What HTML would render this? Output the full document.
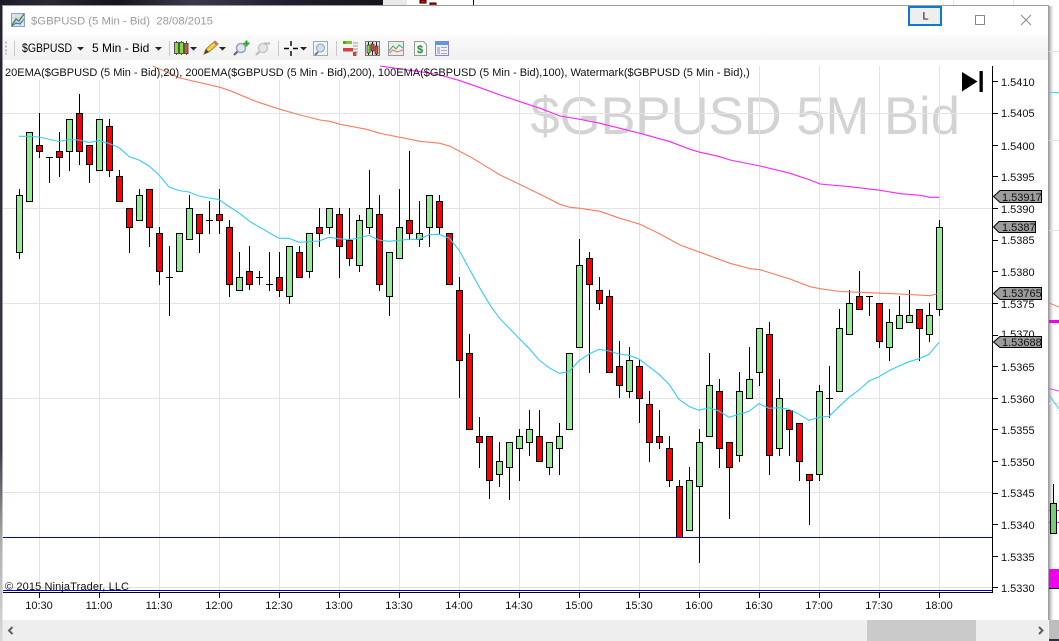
<!DOCTYPE html>
<html><head><meta charset="utf-8"><title>$GBPUSD</title>
<style>
html,body{margin:0;padding:0;background:#fff;width:1059px;height:641px;overflow:hidden}
svg{display:block;position:absolute;left:0;top:0}
text{font-family:"Liberation Sans",sans-serif}
</style></head><body>
<svg width="1059" height="641" viewBox="0 0 1059 641" xmlns="http://www.w3.org/2000/svg">
<defs>
<linearGradient id="top" x1="0" x2="1" y1="0" y2="0"><stop offset="0" stop-color="#1c1c28"/><stop offset=".12" stop-color="#2a2a35"/><stop offset=".3" stop-color="#14141e"/><stop offset=".5" stop-color="#3a3a48"/><stop offset=".75" stop-color="#20202c"/><stop offset="1" stop-color="#15151c"/></linearGradient>
<linearGradient id="left" x1="0" x2="0" y1="0" y2="1"><stop offset="0" stop-color="#20242e"/><stop offset=".7" stop-color="#3a3e48"/><stop offset=".85" stop-color="#b0b0b4"/><stop offset="1" stop-color="#d8d8d8"/></linearGradient>
<linearGradient id="tb" x1="0" x2="0" y1="0" y2="1"><stop offset="0" stop-color="#fbfbfb"/><stop offset="1" stop-color="#f0f0f0"/></linearGradient>
<linearGradient id="sh" x1="0" x2="1" y1="0" y2="0"><stop offset="0" stop-color="#a8a8a8"/><stop offset=".6" stop-color="#e8e8e8"/><stop offset="1" stop-color="#e8e8e8" stop-opacity="0"/></linearGradient>
</defs>

<!-- backdrop -->
<rect width="1059" height="641" fill="#fff"/>
<rect x="0" y="0" width="383" height="5" fill="url(#top)"/>
<rect x="383" y="0" width="24" height="5" fill="#e9e9e9"/>
<rect x="1049" y="6" width="5" height="614" fill="url(#sh)"/>
<g shape-rendering="crispEdges">
<path d="M953.5 0V5M1013.5 0V5" stroke="#e3e3e3"/>
<rect x="420" y="0" width="6" height="3" fill="#f00" stroke="#000"/>
<rect x="430" y="3" width="6" height="3" fill="#f00" stroke="#000"/>
<path d="M473.5 0V5" stroke="#000"/>
<!-- neighbouring chart at the right -->
<path d="M1049 51.5H1059M1049 140.5H1059M1049 230.5H1059M1049 403.5H1059" stroke="#e3e3e3"/>
<path d="M1049 92.5H1059" stroke="#33e0e8"/>
<rect x="1049" y="320" width="10" height="3" fill="#ee00ee"/>
<path d="M1049 510.5H1059M1049 522.5H1059" stroke="#ee00ee"/>
<rect x="1049" y="569" width="10" height="19" fill="#ee00ee"/>
<path d="M1049 588.5H1059" stroke="#000"/>
<path d="M1053.5 484V534" stroke="#000"/>
<rect x="1050.5" y="503.5" width="6" height="30" fill="#77cc77" stroke="#000"/>
<rect x="1049" y="620" width="10" height="21" fill="#bdbdbd"/>
<rect x="1049" y="639" width="10" height="2" fill="#2a3040"/>
</g>
<path d="M1049 303L1059 307" stroke="#ff7f60" fill="none"/>
<path d="M1049 388.5L1059 391" stroke="#ee44ee" fill="none"/>
<path d="M1049 395L1059 409" stroke="#33ccff" fill="none"/>

<!-- window -->
<rect x="0" y="5" width="2.5" height="636" fill="url(#left)"/>
<rect x="2.5" y="5.5" width="1046" height="636" fill="#fff"/>
<path d="M2 5.5H1048.5V620" fill="none" stroke="#9c9c9c"/>
<rect x="3" y="35" width="1045" height="25" fill="url(#tb)"/>

<!-- title bar -->
<rect x="11.5" y="13.5" width="13" height="13" fill="#dfe6f0" stroke="#8ea4c0"/>
<path d="M12 18h12M12 22h12M16 14v12M20 14v12" stroke="#b4c4d8" stroke-width=".7"/>
<path d="M12 25l4-6 3 2 5-7" fill="none" stroke="#3a8a2a" stroke-width="1.3"/>
<path d="M12 26l4-3 4 1 4-5" fill="none" stroke="#3060c0" stroke-width="1"/>
<text x="31" y="24.5" font-size="11.33" fill="#9b9b9b" xml:space="preserve">$GBPUSD (5 Min - Bid)  28/08/2015</text>
<rect x="909" y="7" width="32" height="18" fill="#eeeeee" stroke="#0a7ad6" stroke-width="2"/>
<text x="925.5" y="19.5" font-size="11" fill="#111" text-anchor="middle">L</text>
<rect x="975.5" y="15.5" width="9" height="9" fill="none" stroke="#888"/>
<path d="M1021 15L1031 25M1031 15L1021 25" stroke="#8a8a8a" fill="none"/>

<!-- toolbar -->
<path d="M6 41.5v2M6 45.5v2M6 49.5v2M6 53v1.5" stroke="#bbb" stroke-width="2"/>
<path d="M14.5 41V56M169.5 41V56M278.5 41V56M336.5 41V56" stroke="#c8c8c8"/>
<text x="22" y="52" font-size="11.5" fill="#000" textLength="50" lengthAdjust="spacingAndGlyphs">$GBPUSD</text>
<path d="M77 47h7l-3.5 3.5zM155 47h7l-3.5 3.5zM190 47h7l-3.5 3.5zM219 47h7l-3.5 3.5zM300 47h7l-3.5 3.5z" fill="#222"/>
<text x="92" y="52" font-size="12" fill="#000">5 Min - Bid</text>
<!-- candles icon -->
<g stroke="#555">
<path d="M176.5 41V55M181.5 41V55M186.5 41V55" stroke-width="1"/>
<rect x="174.5" y="42.5" width="4" height="11" fill="#7fe02f"/>
<rect x="179.5" y="42.5" width="4" height="11" fill="#7fe02f"/>
<rect x="184.5" y="43.5" width="3.5" height="10" fill="#e64a2a"/>
</g>
<!-- pencil -->
<path d="M204 54l2-5 9-8 3 3-9 8z" fill="#f7d24a" stroke="#a5841e"/>
<path d="M204 54l2-5 3 3z" fill="#444"/>
<path d="M214 42l3 3" stroke="#e07070" stroke-width="2"/>
<!-- magnifier plus -->
<path d="M234 55l4-4" stroke="#666" stroke-width="2.2"/>
<circle cx="241" cy="48" r="4.5" fill="#dbe8f8" stroke="#98a4b4" stroke-width="1.5"/>
<path d="M243.5 43.5h6M246.5 40.5v6" stroke="#22aa22" stroke-width="2"/>
<!-- magnifier minus -->
<path d="M256 55l4-4" stroke="#bbb" stroke-width="2.2"/>
<circle cx="263" cy="48" r="4.5" fill="#e6e6e6" stroke="#c8c8c8" stroke-width="1.5"/>
<path d="M264 43.5h6" stroke="#bbb" stroke-width="2"/>
<!-- crosshair -->
<path d="M284 48.5h5M293 48.5h5M291 41v5M291 51v5" stroke="#000" stroke-width="1.4"/>
<!-- zoom box -->
<rect x="313.5" y="41.5" width="14" height="14" fill="#f4f4f4" stroke="#aaa"/>
<path d="M315 55l3-3" stroke="#777" stroke-width="2"/>
<circle cx="320.5" cy="48" r="4" fill="#cfe0f6" stroke="#8aa0b8"/>
<!-- indicator icons -->
<rect x="343" y="41" width="9" height="3" fill="#7fc92e"/><rect x="343" y="41" width="3" height="3" fill="#5aa020"/>
<path d="M353 43h5M353 46h5M353 49h5M353 52h5" stroke="#9a9a9a"/>
<rect x="343" y="48" width="10" height="3.5" fill="#d64040"/>
<rect x="353" y="52" width="3.5" height="4" fill="#d64040"/>
<rect x="365.5" y="41.5" width="14" height="14" fill="#e8e8e8" stroke="#777"/>
<path d="M368.5 42v13M372.5 42v13M376.5 42v13" stroke="#222"/>
<rect x="367" y="45" width="3" height="8" fill="#7fe02f" stroke="#222" stroke-width=".6"/>
<rect x="371" y="44" width="3" height="7" fill="#e64a2a" stroke="#222" stroke-width=".6"/>
<rect x="375" y="46" width="3" height="8" fill="#e64a2a" stroke="#222" stroke-width=".6"/>
<rect x="388.5" y="41.5" width="15" height="14" fill="#ececec" stroke="#999"/>
<path d="M389 51l4-5 3 3 3-4 4 3" fill="none" stroke="#3fae5a"/>
<path d="M389 53l4-3 4 2 6-2" fill="none" stroke="#e07070"/>
<path d="M414.5 41.5h9l3 3v11h-12z" fill="#f8f8f8" stroke="#999"/>
<text x="420" y="53" font-size="11" font-weight="bold" fill="#1a8a2a" text-anchor="middle">$</text>
<rect x="435.5" y="41.5" width="13" height="14" fill="#f0f0fa" stroke="#8888c0"/>
<rect x="436" y="42" width="12" height="3" fill="#5a9ae0"/>
<rect x="437" y="47" width="3" height="7" fill="#c8b8e8"/>
<path d="M441 47.5h6M441 50.5h6M441 53.5h6" stroke="#aaa"/>

<!-- chart -->
<text x="960" y="134" font-size="52.6" fill="#d3d3d3" text-anchor="end">$GBPUSD 5M Bid</text>
<g shape-rendering="crispEdges" stroke="#e3e3e3" fill="none">
<path d="M39.5 66V593M99.5 66V593M159.5 66V593M219.5 66V593M279.5 66V593M339.5 66V593M399.5 66V593M459.5 66V593M519.5 66V593M579.5 66V593M639.5 66V593M699.5 66V593M759.5 66V593M819.5 66V593M879.5 66V593M939.5 66V593"/>
<path d="M3 113.5H992M3 208.5H992M3 303.5H992M3 398.5H992M3 492.5H992M3 587.5H992"/>
</g>
<rect x="3" y="62" width="748" height="18" fill="#fff"/>

<!-- wicks -->
<path shape-rendering="crispEdges" stroke="#000" fill="none" d="M19.5 189V259M39.5 113V158M49.5 158V183M59.5 132V177M69.5 119V171M79.5 94V165M89.5 145V183M109.5 119V177M119.5 170V201M129.5 208V253M139.5 189V220M149.5 189V247M159.5 227V285M169.5 246V316M189.5 195V239M199.5 214V253M209.5 201V234M219.5 189V234M229.5 220V297M239.5 252V290M249.5 246V290M259.5 271V285M269.5 252V291M279.5 252V297M289.5 246V304M299.5 246V277M309.5 233V278M319.5 208V247M329.5 208V234M339.5 208V278M349.5 208V266M359.5 215V272M369.5 170V234M379.5 195V291M389.5 252V316M399.5 189V258M409.5 151V240M419.5 201V247M429.5 195V247M439.5 195V234M459.5 277V398M469.5 334V429M479.5 417V468M489.5 436V499M499.5 442V487M509.5 442V500M519.5 429V481M529.5 410V456M539.5 410V461M549.5 442V475M559.5 423V475M579.5 239V347M589.5 252V373M599.5 277V310M609.5 290V372M619.5 341V398M629.5 347V398M639.5 360V423M649.5 391V462M659.5 410V449M669.5 436V487M679.5 480V537M689.5 467V530M699.5 429V563M709.5 353V436M719.5 379V468M729.5 442V519M739.5 372V462M749.5 347V398M759.5 328V386M769.5 322V475M779.5 379V456M789.5 410V456M799.5 423V481M809.5 474V525M819.5 385V481M829.5 366V418M839.5 309V391M849.5 290V334M859.5 271V309M869.5 296V316M879.5 303V348M889.5 309V361M899.5 296V328M909.5 290V322M919.5 309V361M929.5 303V342M939.5 220V316M46 157.5H53M166 277.5H173M206 220.5H213M256 277.5H263M266 284.5H273M826 398.5H833M866 296.5H873"/>
<!-- green bodies -->
<path shape-rendering="crispEdges" stroke="#000" fill="#90ee90" d="M16.5 195.5h6v57h-6zM26.5 132.5h6v69h-6zM66.5 119.5h6v32h-6zM96.5 119.5h6v51h-6zM136.5 195.5h6v25h-6zM176.5 233.5h6v38h-6zM186.5 208.5h6v31h-6zM236.5 277.5h6v13h-6zM286.5 246.5h6v50h-6zM306.5 233.5h6v38h-6zM326.5 208.5h6v19h-6zM356.5 220.5h6v45h-6zM366.5 208.5h6v19h-6zM386.5 252.5h6v44h-6zM396.5 227.5h6v31h-6zM416.5 233.5h6v6h-6zM426.5 195.5h6v32h-6zM496.5 461.5h6v13h-6zM506.5 442.5h6v25h-6zM516.5 436.5h6v12h-6zM526.5 429.5h6v13h-6zM546.5 442.5h6v25h-6zM556.5 436.5h6v12h-6zM566.5 353.5h6v76h-6zM576.5 265.5h6v82h-6zM626.5 360.5h6v31h-6zM686.5 480.5h6v50h-6zM696.5 442.5h6v44h-6zM706.5 385.5h6v51h-6zM736.5 391.5h6v64h-6zM746.5 379.5h6v19h-6zM756.5 328.5h6v44h-6zM776.5 398.5h6v50h-6zM816.5 391.5h6v83h-6zM836.5 328.5h6v63h-6zM846.5 303.5h6v31h-6zM886.5 322.5h6v25h-6zM896.5 315.5h6v13h-6zM906.5 315.5h6v7h-6zM926.5 315.5h6v19h-6zM936.5 227.5h6v82h-6z"/>
<!-- red bodies -->
<path shape-rendering="crispEdges" stroke="#000" fill="#ff0000" d="M36.5 145.5h6v6h-6zM56.5 151.5h6v6h-6zM76.5 113.5h6v38h-6zM86.5 145.5h6v19h-6zM106.5 126.5h6v44h-6zM116.5 176.5h6v25h-6zM126.5 208.5h6v19h-6zM146.5 189.5h6v38h-6zM156.5 233.5h6v38h-6zM196.5 214.5h6v19h-6zM216.5 214.5h6v6h-6zM226.5 227.5h6v57h-6zM246.5 271.5h6v13h-6zM276.5 277.5h6v13h-6zM296.5 252.5h6v25h-6zM316.5 227.5h6v6h-6zM336.5 214.5h6v32h-6zM346.5 240.5h6v18h-6zM376.5 214.5h6v70h-6zM406.5 220.5h6v13h-6zM436.5 201.5h6v26h-6zM446.5 233.5h6v51h-6zM456.5 290.5h6v70h-6zM466.5 353.5h6v76h-6zM476.5 436.5h6v6h-6zM486.5 436.5h6v44h-6zM536.5 436.5h6v25h-6zM586.5 258.5h6v26h-6zM596.5 290.5h6v13h-6zM606.5 296.5h6v76h-6zM616.5 366.5h6v19h-6zM636.5 366.5h6v32h-6zM646.5 404.5h6v38h-6zM656.5 436.5h6v6h-6zM666.5 448.5h6v32h-6zM676.5 486.5h6v51h-6zM716.5 391.5h6v57h-6zM726.5 442.5h6v25h-6zM766.5 334.5h6v121h-6zM786.5 410.5h6v19h-6zM796.5 423.5h6v38h-6zM806.5 474.5h6v6h-6zM856.5 296.5h6v13h-6zM876.5 303.5h6v38h-6zM916.5 309.5h6v19h-6z"/>

<!-- moving averages -->
<polyline fill="none" stroke="#ff7a5c" stroke-width="1.1" points="153,66 180,78 220,87.3 230,90.7 256.7,101.7 280,109.3 300,115 320,120 330,121.3 340,124.3 366.7,129.3 380,133.3 400,137.3 420,141.3 440,143.3 450,146.3 470,156.7 480,162.7 500,175 520,184.5 540,194.3 560,204.3 570,207.3 580,208.3 600,211.3 620,218.3 640,224.3 660,234 680,245 700,252.3 730,263.3 750,268.7 760,269.7 790,279 810,286.7 820,288.7 840,291.5 860,292.3 900,294 930,295.7 936.7,294"/>
<polyline fill="none" stroke="#ff22ff" stroke-width="1.1" points="380,66 420,71.7 440,75 460,80.7 480,87.7 500,95 520,101.7 540,108.3 560,116 580,119.3 600,123.3 620,128.3 640,133.3 670,141.7 690,149.3 700,152.3 720,156.7 730,160 760,166 790,173.3 810,180 820,184 850,186.7 880,190.3 900,193.7 920,195.3 930,197.3 939,197.3"/>
<polyline fill="none" stroke="#33ccff" stroke-width="1.1" points="19,136.3 26,136.3 39,137 59,141.5 69,139.5 79,140 89,142.5 99,140.5 109,143.5 119,147.5 129,156.5 139,160 149,166 159,175 169,187 179,190.5 189,192 199,196 209,198 219,199.5 229,206.5 239,213 250,221.7 279,238.3 289,238.3 299,242.3 319,241 329,237.3 339,238.7 349,239.7 359,238 369,235.3 379,240 389,241.3 399,240.3 409,239.3 419,239.3 429,234.7 439,234.3 449,238 459,250 469,268.3 479,286.7 489,303.3 499,317.7 509,328 519,338.3 529,348.3 539,360 549,367.7 559,373.3 569,371.7 579,360.7 589,354 599,349.3 609,351 619,354 629,355.3 639,359 649,366.7 659,374.3 669,384.3 679,399.3 689,406.5 699,410.3 709,407.7 719,411 729,417.3 739,414.3 749,411.3 759,403.7 769,408.3 779,407.7 789,409.3 799,414.3 809,420.3 819,417.3 829,416.3 839,406.7 849,397.3 859,390 869,381 879,376.7 889,370.7 899,366 909,361.7 919,358.7 929,354.3 939,342.3"/>

<!-- chart text -->
<text x="5" y="76" font-size="11" fill="#111">20EMA($GBPUSD (5 Min - Bid),20), 200EMA($GBPUSD (5 Min - Bid),200), 100EMA($GBPUSD (5 Min - Bid),100), Watermark($GBPUSD (5 Min - Bid),)</text>
<text x="5" y="590" font-size="11" fill="#111" textLength="124" lengthAdjust="spacing">© 2015 NinjaTrader, LLC</text>

<!-- horizontal levels -->
<g shape-rendering="crispEdges">
<path d="M3 537.5H992M3 590.5H992" stroke="#0000c8"/>
<path d="M3 592.5H993M992.5 66V593" stroke="#000"/>
<path d="M39.5 593V598M99.5 593V598M159.5 593V598M219.5 593V598M279.5 593V598M339.5 593V598M399.5 593V598M459.5 593V598M519.5 593V598M579.5 593V598M639.5 593V598M699.5 593V598M759.5 593V598M819.5 593V598M879.5 593V598M939.5 593V598" stroke="#000"/>
<path d="M993 81.5H998M993 113.5H998M993 145.5H998M993 176.5H998M993 208.5H998M993 240.5H998M993 271.5H998M993 303.5H998M993 335.5H998M993 366.5H998M993 398.5H998M993 429.5H998M993 461.5H998M993 493.5H998M993 524.5H998M993 556.5H998M993 587.5H998" stroke="#000"/>
</g>

<!-- play to end -->
<path d="M962 72L977.5 81.5L962 91.5Z" fill="#000"/>
<rect x="979.5" y="71" width="3.3" height="21" fill="#000"/>

<!-- price axis -->
<g font-size="11" fill="#111">
<text x="1001" y="86">1.5410</text>
<text x="1001" y="117">1.5405</text>
<text x="1001" y="150">1.5400</text>
<text x="1001" y="181">1.5395</text>
<text x="1001" y="213">1.5390</text>
<text x="1001" y="244">1.5385</text>
<text x="1001" y="276">1.5380</text>
<text x="1001" y="308">1.5375</text>
<text x="1001" y="338">1.5370</text>
<text x="1001" y="371">1.5365</text>
<text x="1001" y="403">1.5360</text>
<text x="1001" y="434">1.5355</text>
<text x="1001" y="466">1.5350</text>
<text x="1001" y="497">1.5345</text>
<text x="1001" y="529">1.5340</text>
<text x="1001" y="561">1.5335</text>
<text x="1001" y="592">1.5330</text>
</g>
<!-- price flags -->
<g stroke="#000" fill="#9c9c9c">
<path d="M993.5 196.5L1000 190.5H1041.5V202.5H1000Z"/>
<path d="M993.5 227L999 221.5H1035.5V232.5H999Z"/>
<path d="M993.5 293.5L1000 287.5H1041.5V299.5H1000Z"/>
<path d="M993.5 342L1000 336.5H1041.5V347.5H1000Z"/>
</g>
<g font-size="11" fill="#111">
<text x="1002" y="201">1.53917</text>
<text x="1002" y="231">1.5387</text>
<text x="1002" y="297">1.53765</text>
<text x="1002" y="346">1.53688</text>
</g>

<!-- time axis -->
<g font-size="11" fill="#111" text-anchor="middle">
<text x="39" y="609">10:30</text><text x="99" y="609">11:00</text><text x="159" y="609">11:30</text><text x="219" y="609">12:00</text><text x="279" y="609">12:30</text><text x="339" y="609">13:00</text><text x="399" y="609">13:30</text><text x="459" y="609">14:00</text><text x="519" y="609">14:30</text><text x="579" y="609">15:00</text><text x="639" y="609">15:30</text><text x="699" y="609">16:00</text><text x="759" y="609">16:30</text><text x="819" y="609">17:00</text><text x="879" y="609">17:30</text><text x="939" y="609">18:00</text>
</g>

<!-- scrollbar -->
<rect x="2.5" y="620" width="1046" height="21" fill="#eeeeee"/>
<rect x="867" y="620" width="109" height="21" fill="#cacaca"/>
<path d="M12.5 627L9 630.5L12.5 634" fill="none" stroke="#606060" stroke-width="2"/>
<path d="M1039 627L1042.5 630.5L1039 634" fill="none" stroke="#606060" stroke-width="2"/>
</svg>
</body></html>
